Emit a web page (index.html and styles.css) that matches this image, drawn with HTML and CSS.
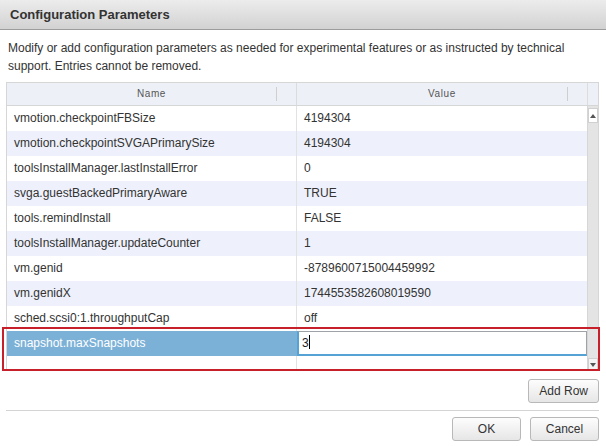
FILE: index.html
```html
<!DOCTYPE html>
<html>
    <head>
        <title>Configuration Parameters</title>
        <link rel="stylesheet" href="styles.css">
    </head>
    <body>
    <div class="dialog">
        <div class="titlebar">Configuration Parameters</div>
        <p class="desc">Modify or add configuration parameters as needed for experimental features or as instructed by technical support. Entries cannot be removed.</p>

        <div class="grid">
            <div class="grid-head">
                <div class="hcell hcell-name">Name<span class="grip"></span></div>
                <div class="hcell hcell-value">Value<span class="grip"></span></div>
                <div class="hcorner"></div>
            </div>
            <div class="grid-body">
                <div class="rows">
                    <div class="row"><div class="cell cell-name">vmotion.checkpointFBSize</div><div class="cell">4194304</div></div>
                    <div class="row alt"><div class="cell cell-name">vmotion.checkpointSVGAPrimarySize</div><div class="cell">4194304</div></div>
                    <div class="row"><div class="cell cell-name">toolsInstallManager.lastInstallError</div><div class="cell">0</div></div>
                    <div class="row alt"><div class="cell cell-name">svga.guestBackedPrimaryAware</div><div class="cell">TRUE</div></div>
                    <div class="row"><div class="cell cell-name">tools.remindInstall</div><div class="cell">FALSE</div></div>
                    <div class="row alt"><div class="cell cell-name">toolsInstallManager.updateCounter</div><div class="cell">1</div></div>
                    <div class="row"><div class="cell cell-name">vm.genid</div><div class="cell">-8789600715004459992</div></div>
                    <div class="row alt"><div class="cell cell-name">vm.genidX</div><div class="cell">1744553582608019590</div></div>
                    <div class="row"><div class="cell cell-name">sched.scsi0:1.throughputCap</div><div class="cell">off</div></div>
                    <div class="row selected"><div class="cell cell-name">snapshot.maxSnapshots</div><div class="cell cell-edit"><div class="edit-box">3<span class="caret"></span></div></div></div>
                    <div class="row"><div class="cell cell-name"></div><div class="cell"></div></div>
                </div>
                <div class="scrollbar">
                    <div class="sb-btn"><span class="arrow-up"></span></div>
                    <div class="sb-track"></div>
                    <div class="sb-btn sb-down"><span class="arrow-down"></span></div>
                </div>
            </div>
            <div class="highlight"></div>
        </div>

        <div class="add-row">
            <button class="btn">Add Row</button>
        </div>
        <div class="footer">
            <button class="btn">OK</button>
            <button class="btn">Cancel</button>
        </div>
    </div>
    </body>
</html>
```

FILE: styles.css
```css
body {
    margin: 0;
    background: #ffffff;
    font-family: "Liberation Sans", Arial, sans-serif;
    font-size: 12px;
    color: #333333;
}

.dialog {
    width: 606px;
    height: 446px;
    overflow: hidden;
}

.titlebar {
    height: 30px;
    box-sizing: border-box;
    padding: 7px 10px 0 10px;
    background: linear-gradient(#ececec, #d2d2d2);
    border-bottom: 1px solid #9c9c9c;
    font-size: 13px;
    font-weight: bold;
    color: #333333;
}

.desc {
    margin: 0;
    padding: 9px 20px 0 8px;
    height: 43px;
    line-height: 18px;
}

.grid {
    position: relative;
    margin: 0 7px 0 6px;
    border: 1px solid #d6d6d6;
    border-bottom: none;
}

.grid-head {
    display: flex;
    height: 22px;
    background: #eef0f8;
    border-bottom: 1px solid #d6d6d6;
}

.hcell {
    position: relative;
    text-align: center;
    font-size: 10px;
    letter-spacing: 0.6px;
    color: #555555;
    line-height: 22px;
    border-right: 1px solid #dcdcdc;
}

.hcell-name {
    width: 289px;
}

.hcell-value {
    width: 290px;
}

.grip {
    position: absolute;
    right: 19px;
    top: 4px;
    height: 14px;
    border-left: 1px solid #cfcfcf;
}

.hcorner {
    flex: 1;
}

.grid-body {
    display: flex;
    height: 265px;
    overflow: hidden;
}

.rows {
    width: 581px;
}

.row {
    display: flex;
    height: 25px;
    line-height: 25px;
}

.row.alt {
    background: #eef1fb;
}

.cell {
    padding-left: 7px;
    white-space: nowrap;
    overflow: hidden;
    flex: 1;
}

.cell-name {
    width: 282px;
    flex: none;
    border-right: 1px solid #e2e2e2;
}

.row.selected .cell-name {
    background: #7cb1d7;
    color: #ffffff;
    border-right-color: #7cb1d7;
}

.cell-edit {
    padding: 0;
}

.edit-box {
    height: 25px;
    box-sizing: border-box;
    line-height: 22px;
    padding-left: 3px;
    background: #ffffff;
    border: 1px solid #9fa3a8;
    border-left: 2px solid #55a3d4;
    border-bottom: 2px solid #55a3d4;
    color: #222222;
}

.caret {
    display: inline-block;
    width: 1px;
    height: 14px;
    background: #000000;
    vertical-align: -2px;
}

.scrollbar {
    width: 10px;
    display: flex;
    flex-direction: column;
    background: #e4e4e4;
    border-left: 1px solid #d6d6d6;
}

.sb-btn {
    height: 15px;
    background: #ffffff;
    border: 1px solid #d0d0d0;
    box-sizing: border-box;
    margin-top: 2px;
    display: flex;
    align-items: center;
    justify-content: center;
}

.sb-track {
    flex: 1;
}

.sb-down {
    margin-top: 0;
    background: #f4f4f4;
    height: 13px;
}

.arrow-up {
    border-left: 3px solid transparent;
    border-right: 3px solid transparent;
    border-bottom: 4px solid #555555;
}

.arrow-down {
    border-left: 3px solid transparent;
    border-right: 3px solid transparent;
    border-top: 4px solid #555555;
}

/* red annotation box drawn over the last rows */
.highlight {
    position: absolute;
    left: -5px;
    top: 244px;
    width: 594px;
    height: 40px;
    border: 2px solid #c8202a;
}

.add-row {
    display: flex;
    justify-content: flex-end;
    padding: 8px 0 7px 0;
    border-bottom: 1px solid #d4d4d4;
    margin: 0 7px 0 6px;
}

.footer {
    display: flex;
    justify-content: flex-end;
    gap: 9px;
    padding: 6px 7px 0 0;
}

.btn {
    height: 24px;
    min-width: 69px;
    padding: 0 10px;
    font-family: "Liberation Sans", Arial, sans-serif;
    font-size: 12px;
    color: #333333;
    background: linear-gradient(#fdfdfd, #e6e6e6);
    border: 1px solid #b8b8b8;
    border-radius: 3px;
}
```
